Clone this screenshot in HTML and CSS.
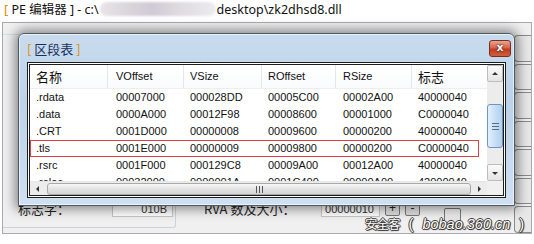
FILE: index.html
```html
<!DOCTYPE html>
<html lang="zh-CN">
<head>
  <meta charset="UTF-8">
  <title>PE 编辑器</title>
  <link rel="stylesheet" href="styles.css">
</head>
<body>

  <div class="titulo">
    <span class="colchete">[</span> PE 编辑器 ] - c:\<span class="borrado"></span>desktop\zk2dhsd8.dll
  </div>

  <div class="janela">
    <div class="corpo">
      <div class="painel">
        <div class="linha-topo"></div>
        <div class="rodape">
          <div class="grupo-fim">
            <span class="rotulo">标志字：</span>
            <span class="campo">010B</span>
          </div>
          <span class="rotulo rva">RVA 数及大小：</span>
          <span class="campo largo">00000010</span>
          <span class="mini">+</span>
          <span class="mini">-</span>
          <span class="mini vazio"></span>
        </div>
      </div>
      <div class="botoes-lado">
        <span></span><span></span><span></span><span></span><span></span><span></span><span></span>
      </div>
    </div>

    <div class="dialogo">
      <div class="dialogo-topo">
        <span class="dialogo-titulo"><span class="colchete">[</span> 区段表 <span class="colchete">]</span></span>
        <span class="fechar">x</span>
      </div>
      <div class="lista">
        <div class="tabela">
          <div class="cabecalho">
            <span class="c1 cjk">名称</span>
            <span class="c2">VOffset</span>
            <span class="c3">VSize</span>
            <span class="c4">ROffset</span>
            <span class="c5">RSize</span>
            <span class="c6 cjk">标志</span>
          </div>
          <div id="linhas"></div>
        </div>
        <div class="rolagem-v">
          <span class="seta cima"></span>
          <span class="trilho"><span class="polegar"><i></i><i></i><i></i></span></span>
          <span class="seta baixo"></span>
        </div>
        <div class="rolagem-h">
          <span class="seta esq"></span>
          <span class="polegar-h"><i></i><i></i><i></i></span>
          <span class="seta dir"></span>
        </div>
        <div class="canto"></div>
      </div>
    </div>

    <div class="marca"><span class="marca-cjk">安全客</span> ( <em>bobao.360.cn</em> )</div>
  </div>

  <script>
    const secoes = [
      ['.rdata', '00007000', '000028DD', '00005C00', '00002A00', '40000040'],
      ['.data', '0000A000', '00012F98', '00008600', '00001000', 'C0000040'],
      ['.CRT', '0001D000', '00000008', '00009600', '00000200', '40000040'],
      ['.tls', '0001E000', '00000009', '00009800', '00000200', 'C0000040'],
      ['.rsrc', '0001F000', '000129C8', '00009A00', '00012A00', '40000040'],
      ['.reloc', '00032000', '0000001A', '0001C400', '00000A00', '42000040']
    ];

    const linhas = document.getElementById('linhas');
    secoes.forEach((secao, index) => {
      const linha = document.createElement('div');
      linha.className = index === 3 ? 'linha sel' : 'linha';
      secao.forEach((valor, i) => {
        const celula = document.createElement('span');
        celula.className = 'c' + (i + 1);
        celula.textContent = valor;
        linha.appendChild(celula);
      });
      linhas.appendChild(linha);
    });
  </script>

</body>
</html>
```

FILE: styles.css
```css
body {
  margin: 0;
  width: 534px;
  height: 244px;
  overflow: hidden;
  background: #fff;
  font-family: "Liberation Sans", Arial, sans-serif;
}

.titulo {
  height: 22px;
  padding-left: 4px;
  font-family: "Noto Sans", "Noto Sans CJK SC", sans-serif;
  font-size: 12.5px;
  line-height: 20px;
  color: #111;
  white-space: nowrap;
}

.colchete {
  color: #e08a00;
}

.borrado {
  display: inline-block;
  width: 116px;
  height: 14px;
  margin: 0 1px;
  vertical-align: -2px;
  border-radius: 7px;
  background: linear-gradient(90deg, #e8e4e6, #d8d2d8 30%, #cfcbd6 45%, #e0dce0 70%, #ecebee);
  filter: blur(1px);
}

.janela {
  position: relative;
  margin-left: 2px;
  width: 528px;
  height: 210px;
  border: 1px solid #a7abb0;
  background: #f0f0f0;
}

.corpo {
  display: flex;
  height: 100%;
}

.painel {
  flex: 1;
  display: flex;
  flex-direction: column;
  justify-content: space-between;
}

.linha-topo {
  width: 173px;
  margin-top: 11px;
  border-top: 1px solid #d5dfe5;
}

.rodape {
  display: flex;
  align-items: flex-start;
  height: 27px;
  margin-bottom: 5px;
  font-family: "Noto Sans CJK SC", sans-serif;
  font-size: 13px;
  color: #222;
}

.grupo-fim {
  display: flex;
  align-items: flex-start;
  width: 172px;
  height: 26px;
  border-right: 1px solid #c9d3da;
  border-bottom: 1px solid #c9d3da;
  border-radius: 0 0 3px 0;
}

.rotulo {
  width: 94px;
  margin-left: 15px;
  line-height: 16px;
}

.campo {
  width: 54px;
  height: 14px;
  padding-right: 5px;
  border: 1px solid #c6c6c6;
  background: #fff;
  font-family: "Liberation Sans", Arial, sans-serif;
  font-size: 11px;
  line-height: 14px;
  color: #333;
  text-align: right;
}

.rva {
  width: 117px;
  margin-left: 28px;
}

.campo.largo {
  width: 52px;
}

.mini {
  width: 13px;
  height: 13px;
  margin-left: 5px;
  border: 1px solid #777;
  border-radius: 2px;
  background: linear-gradient(#f6f6f6, #dcdcdc);
  font-family: "Liberation Sans", Arial, sans-serif;
  font-size: 12px;
  line-height: 12px;
  text-align: center;
}

.mini:first-of-type {
  margin-left: 4px;
}

.mini.vazio {
  width: 15px;
  height: 16px;
  margin: 7px 0 0 24px;
}

.botoes-lado {
  display: flex;
  flex-direction: column;
  gap: 2px;
  width: 17px;
  padding-top: 12px;
}

.botoes-lado span {
  height: 26px;
  border: 1px solid #8a8a8a;
  border-right: none;
  border-radius: 4px 0 0 4px;
  background: #e8e8e8;
}

/* janela do diálogo sobre a janela principal */
.dialogo {
  position: absolute;
  left: 15px;
  top: 10px;
  width: 479px;
  height: 164px;
  display: flex;
  flex-direction: column;
  padding: 0 8px 7px 8px;
  border: 1px solid #4f5966;
  border-radius: 6px 6px 0 0;
  background: linear-gradient(#c9dcee, #bcd2e9 40%, #cfe0f1);
  box-shadow: 0 0 12px 3px rgba(0, 0, 0, 0.45), inset 0 0 0 1px rgba(255, 255, 255, 0.6);
}

.dialogo-topo {
  display: flex;
  justify-content: space-between;
  align-items: flex-start;
  height: 28px;
}

.dialogo-titulo {
  margin-top: 6px;
  font-family: "Noto Sans CJK SC", sans-serif;
  font-size: 13px;
  line-height: 17px;
  color: #1b2f5a;
}

.fechar {
  width: 20px;
  height: 15px;
  margin: 6px -5px 0 0;
  border: 1px solid #7a2e1e;
  border-radius: 3px;
  background: linear-gradient(#eba48f, #d9634a 45%, #c23c1f 55%, #d0603f);
  color: #fff;
  font-family: "DejaVu Sans", sans-serif;
  font-size: 11px;
  font-weight: bold;
  line-height: 14px;
  text-align: center;
  text-shadow: 0 0 2px #3a1a10, 0 0 1px #3a1a10;
}

.lista {
  flex: 1;
  display: grid;
  grid-template-columns: 1fr 16px;
  grid-template-rows: 1fr 14px;
  border: 3px double #1d1d1d;
  background: #fff;
  overflow: hidden;
}

.tabela {
  overflow: hidden;
  font-size: 11px;
  color: #111;
}

.cabecalho {
  display: flex;
  height: 23px;
  border-bottom: 1px solid #eceef1;
  background: linear-gradient(#fff, #fafbfc);
}

.cabecalho span {
  height: 23px;
  border-right: 1px solid #e3e6ea;
  line-height: 23px;
}

.cabecalho .cjk {
  font-family: "Noto Sans CJK SC", sans-serif;
  font-size: 13px;
}

.linha {
  display: flex;
  height: 17px;
  line-height: 17px;
}

.linha.sel {
  width: 449px;
  outline: 1px solid #e0403f;
  outline-offset: -1px;
}

.c1, .c2, .c3, .c4, .c5, .c6 {
  flex: none;
  box-sizing: border-box;
  padding-left: 6px;
  white-space: nowrap;
}

.c1 { width: 78px; }
.c2 { width: 76px; padding-left: 8px; }
.c3 { width: 78px; }
.c4 { width: 74px; }
.c5 { width: 76px; padding-left: 7px; }
.c6 { width: 76px; }

.rolagem-v {
  display: flex;
  flex-direction: column;
  background: #ececec;
}

.seta {
  position: relative;
  display: block;
  box-sizing: border-box;
  flex: none;
  border: 1px solid #bdbdbd;
  border-radius: 2px;
  background: linear-gradient(#fbfbfb, #e4e4e4);
}

.seta.cima, .seta.baixo {
  height: 17px;
}

.seta.esq, .seta.dir {
  width: 16px;
  border-color: transparent;
  background: transparent;
}

.seta::after {
  content: "";
  position: absolute;
  left: 50%;
  top: 50%;
  width: 0;
  height: 0;
  border: 3px solid transparent;
}

.seta.cima::after {
  margin: -5px 0 0 -3px;
  border-bottom: 3px solid #333;
}

.seta.baixo::after {
  margin: -1px 0 0 -3px;
  border-top: 3px solid #333;
}

.seta.esq::after {
  margin: -3px 0 0 -5px;
  border-right: 3px solid #333;
}

.seta.dir::after {
  margin: -3px 0 0 -1px;
  border-left: 3px solid #333;
}

.trilho {
  flex: 1;
  display: flex;
  flex-direction: column;
  padding: 22px 0 16px 0;
}

.polegar {
  flex: 1;
  display: flex;
  flex-direction: column;
  justify-content: center;
  align-items: center;
  gap: 2px;
  border: 1px solid #6b95c2;
  border-radius: 3px;
  background: linear-gradient(90deg, #e4f0fb, #c7dff5 50%, #b2d0ee);
}

.polegar i {
  display: block;
  width: 7px;
  height: 1px;
  background: #4e6f92;
}

.rolagem-h {
  display: flex;
  border-top: 1px solid #e6e6e6;
  background: #ececec;
}

.polegar-h {
  flex: 1;
  display: flex;
  justify-content: center;
  align-items: center;
  gap: 2px;
  margin: 1px 0 0 1px;
  border: 1px solid #a8a8a8;
  border-radius: 3px;
  background: linear-gradient(#f7f7f7, #e2e2e2 50%, #d6d6d6);
}

.polegar-h i {
  display: block;
  width: 1px;
  height: 7px;
  background: #555;
}

.canto {
  background: #f0f0f0;
}

.marca {
  position: absolute;
  left: 362px;
  top: 192px;
  font-family: "Liberation Sans", Arial, sans-serif;
  font-size: 14.5px;
  line-height: 17px;
  color: #fff;
  white-space: nowrap;
  word-spacing: 5px;
  text-shadow: 1px 0 0 #3a3a3a, -1px 0 0 #3a3a3a, 0 1px 0 #3a3a3a, 0 -1px 0 #3a3a3a, 1px 1px 1px #555;
}

.marca-cjk {
  font-family: "Noto Sans CJK SC", sans-serif;
  font-size: 12.5px;
  letter-spacing: -1px;
}

.marca em {
  font-style: italic;
}
```
